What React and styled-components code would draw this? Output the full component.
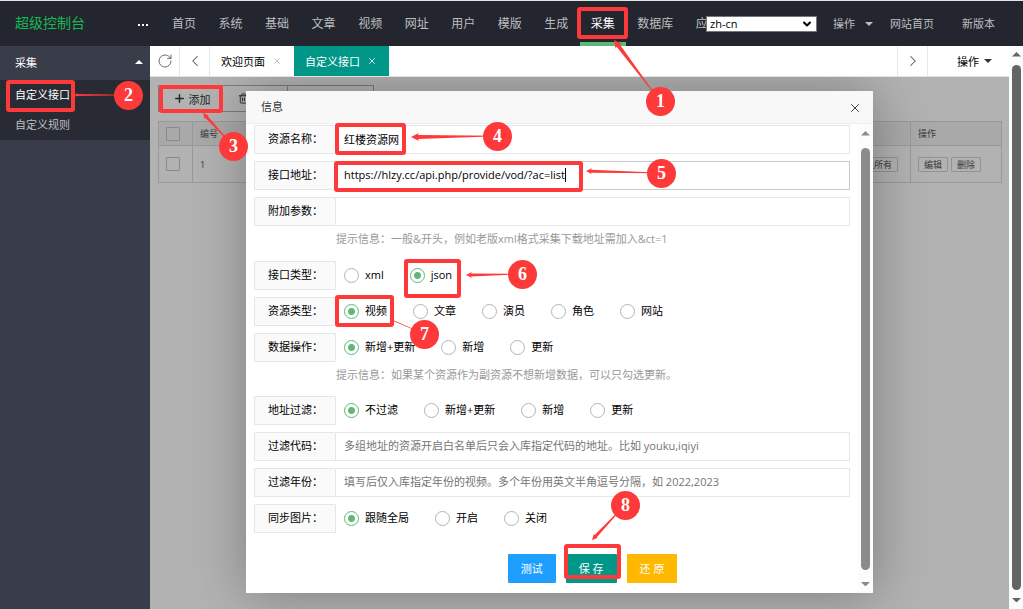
import styled, { createGlobalStyle } from 'styled-components';
import { RotateCw, ChevronLeft, ChevronRight, ChevronDown, Plus, Trash2, X } from 'lucide-react';

const navItems = ['首页', '系统', '基础', '文章', '视频', '网址', '用户', '模版', '生成', '采集', '数据库', '应用'];

const frames = [
	{ x: 577, y: 7, w: 51, h: 32 },
	{ x: 6, y: 80, w: 69, h: 32 },
	{ x: 159, y: 85, w: 64, h: 28 },
	{ x: 335, y: 123, w: 71, h: 32 },
	{ x: 334, y: 161, w: 249, h: 31 },
	{ x: 404, y: 259, w: 57, h: 39 },
	{ x: 335, y: 295, w: 59, h: 32 },
	{ x: 564, y: 544, w: 57, h: 35 },
];

const steps = [
	{ no: 1, x: 660, y: 101, tip: [614, 40], head: 4 },
	{ no: 2, x: 128, y: 95, tip: [74, 95], head: 2 },
	{ no: 3, x: 233, y: 146, tip: [203, 113], head: 3 },
	{ no: 4, x: 497, y: 136, tip: [411, 137], head: 4 },
	{ no: 5, x: 661, y: 173, tip: [586, 171], head: 3 },
	{ no: 6, x: 522, y: 274, tip: [466, 275], head: 3 },
	{ no: 7, x: 424, y: 334, tip: [392, 320], head: 1 },
	{ no: 8, x: 625, y: 505, tip: [592, 540], head: 3 },
];

// 箭头：头部宽，尾部渐细
const arrowPoints = ({ x, y, tip, head }) => {
	const [tx, ty] = tip;
	const len = Math.hypot(x - tx, y - ty);
	const ux = (x - tx) / len;
	const uy = (y - ty) / len;
	const at = (d, s) => `${tx + ux * d - uy * s},${ty + uy * d + ux * s}`;
	const d = head * 2;
	const s = head / 2;
	return [at(0, 0), at(d, head), at(d - 1, s), at(len, 0.2), at(len, -0.2), at(d - 1, -s), at(d, -head)].join(' ');
};

const Triangle = ({ up, color, size = 8 }) => (
	<svg width={size} height={size / 2} viewBox="0 0 8 4" aria-hidden="true">
		<path d={up ? 'M0 4L4 0L8 4Z' : 'M0 0L4 4L8 0Z'} fill={color} />
	</svg>
);

const RadioRow = ({ title, name, options, checked }) => (
	<Row>
		<RowTitle as="span">{title}</RowTitle>
		<RadioGroup role="radiogroup" aria-label={title}>
			{options.map((option) => (
				<RadioLabel key={option}>
					<Radio name={name} defaultChecked={option === checked} />
					<RadioText>{option}</RadioText>
				</RadioLabel>
			))}
		</RadioGroup>
	</Row>
);

const TextRow = ({ title, id, active, caret, ...rest }) => (
	<Row>
		<RowTitle htmlFor={id}>{title}</RowTitle>
		<Field $active={active}>
			<TextInput id={id} $fit={caret} {...rest} />
			{caret && <Caret />}
		</Field>
	</Row>
);

const ScrollBar = ({ color }) => (
	<>
		<Triangle up color={color} size={9} />
		<Thumb $color={color} />
		<Triangle color={color} size={9} />
	</>
);

const App = () => {
	return (
		<Page>
			<GlobalStyle />
			<Header>
				<Logo href="#">超级控制台</Logo>
				<Dots aria-label="菜单">
					<svg width="10" height="4" viewBox="0 0 10 4">
						<path d="M0 1h2v2H0zM4 1h2v2H4zM8 1h2v2H8z" fill="#fff" />
					</svg>
				</Dots>
				<Nav>
					{navItems.map((item) => (
						<NavItem key={item} href="#" $active={item === '采集'}>
							{item}
						</NavItem>
					))}
				</Nav>
				<Tools>
					<SelectBox>
						<Lang aria-label="语言" defaultValue="zh-cn">
							<option>zh-cn</option>
						</Lang>
						<ChevronDown size={12} strokeWidth={4} />
					</SelectBox>
					<ToolLink href="#" $gap="17px">
						操作
						<Triangle color="#bdbec0" />
					</ToolLink>
					<ToolLink href="#" $gap="28px">
						网站首页
					</ToolLink>
					<ToolLink href="#" $gap="28px">
						新版本
					</ToolLink>
				</Tools>
			</Header>

			<Main>
				<Side>
					<SideTitle>
						采集
						<Triangle up color="#fff" />
					</SideTitle>
					<SideList>
						<SideLink href="#" $active>
							自定义接口
						</SideLink>
						<SideLink href="#">自定义规则</SideLink>
					</SideList>
				</Side>

				<Center>
					<TabBar>
						<TabIcon aria-label="刷新">
							<RotateCw size={16} strokeWidth={1.3} />
						</TabIcon>
						<TabIcon aria-label="向左">
							<ChevronLeft size={18} strokeWidth={1.4} />
						</TabIcon>
						<Tab>
							欢迎页面
							<X size={10} strokeWidth={2} color="#bbb" />
						</Tab>
						<Tab $active>
							自定义接口
							<X size={10} strokeWidth={2} />
						</Tab>
						<TabSpace />
						<TabIcon aria-label="向右">
							<ChevronRight size={18} strokeWidth={1.4} />
						</TabIcon>
						<TabMenu>
							操作
							<Triangle color="#333" />
						</TabMenu>
					</TabBar>

					<Content>
						<Toolbar>
							<ToolButton $w="65px">
								<Plus size={13} strokeWidth={2.6} />
								添加
							</ToolButton>
							<ToolButton $w="64px" $start aria-label="删除">
								<Trash2 size={11} />
							</ToolButton>
							<ToolButton $w="85px" aria-label="更多" />
						</Toolbar>
						<Table>
							<thead>
								<tr>
									<Th $w="34px">
										<Check aria-label="全选" />
									</Th>
									<Th $w="60px">编号</Th>
									<Th />
									<Th $w="91px">操作</Th>
								</tr>
							</thead>
							<tbody>
								<tr>
									<Td>
										<Check aria-label="选择 1" />
									</Td>
									<Td>1</Td>
									<Td $right>
										<MiniButton>采集所有</MiniButton>
									</Td>
									<Td>
										<MiniGroup>
											<MiniButton>编辑</MiniButton>
											<MiniButton>删除</MiniButton>
										</MiniGroup>
									</Td>
								</tr>
							</tbody>
						</Table>

						<Shade>
							<Modal role="dialog" aria-label="信息">
								<ModalHead>
									信息
									<CloseButton aria-label="关闭窗口">
										<X size={14} strokeWidth={1.6} />
									</CloseButton>
								</ModalHead>
								<ModalBody>
									<Form onSubmit={(e) => e.preventDefault()}>
										<TextRow title="资源名称：" id="name" defaultValue="红楼资源网" />
										<TextRow
											title="接口地址："
											id="url"
											defaultValue="https://hlzy.cc/api.php/provide/vod/?ac=list"
											active
											caret
										/>
										<TextRow title="附加参数：" id="param" />
										<Hint $gap="11px">提示信息：一般&amp;开头，例如老版xml格式采集下载地址需加入&amp;ct=1</Hint>
										<RadioRow title="接口类型：" name="type" options={['xml', 'json']} checked="json" />
										<RadioRow
											title="资源类型："
											name="mid"
											options={['视频', '文章', '演员', '角色', '网站']}
											checked="视频"
										/>
										<RadioRow
											title="数据操作："
											name="opt"
											options={['新增+更新', '新增', '更新']}
											checked="新增+更新"
										/>
										<Hint $gap="10px">提示信息：如果某个资源作为副资源不想新增数据，可以只勾选更新。</Hint>
										<RadioRow
											title="地址过滤："
											name="filter"
											options={['不过滤', '新增+更新', '新增', '更新']}
											checked="不过滤"
										/>
										<TextRow
											title="过滤代码："
											id="code"
											placeholder="多组地址的资源开启白名单后只会入库指定代码的地址。比如 youku,iqiyi"
										/>
										<TextRow
											title="过滤年份："
											id="year"
											placeholder="填写后仅入库指定年份的视频。多个年份用英文半角逗号分隔，如 2022,2023"
										/>
										<RadioRow
											title="同步图片："
											name="pic"
											options={['跟随全局', '开启', '关闭']}
											checked="跟随全局"
										/>
										<Actions>
											<Button $bg="#1e9fff">测试</Button>
											<Button $bg="#009688">保 存</Button>
											<Button $bg="#ffb800">还 原</Button>
										</Actions>
									</Form>
									<InnerScroll>
										<ScrollBar color="#8b8b8b" />
									</InnerScroll>
								</ModalBody>
							</Modal>
						</Shade>
					</Content>
				</Center>

				<OuterScroll>
					<ScrollBar color="#646464" />
				</OuterScroll>
			</Main>

			<Guide>
				{frames.map((f) => (
					<Frame key={`${f.x}-${f.y}`} $x={f.x} $y={f.y} $w={f.w} $h={f.h} />
				))}
				<Arrows width="1023" height="609" aria-hidden="true">
					{steps.map((s) => (
						<polygon key={s.no} points={arrowPoints(s)} fill="#fd3939" />
					))}
				</Arrows>
				{steps.map((s) => (
					<Badge key={s.no} $x={s.x} $y={s.y}>
						{s.no}
					</Badge>
				))}
			</Guide>
		</Page>
	);
};

export default App;

// CSS
const GlobalStyle = createGlobalStyle`
	* {
		box-sizing: border-box;
	}

	body {
		margin: 0;
		font-family: 'Open Sans', 'Noto Sans CJK SC', sans-serif;
		font-size: 11px;
		color: #000;
	}

	button, input, select {
		margin: 0;
		padding: 0;
		border: 0;
		font: inherit;
		color: inherit;
		background: none;
	}

	a {
		color: inherit;
		text-decoration: none;
	}

	svg {
		flex: none;
	}
`;

const Page = styled.div`
	position: relative;
	display: flex;
	flex-direction: column;
	min-height: 100vh;
	overflow: hidden;
`;

const Header = styled.header`
	display: flex;
	align-items: stretch;
	height: 46px;
	border-top: 1px solid #dfe9df;
	background: #23262e;
	color: #bdbec0;
`;

const Logo = styled.a`
	flex: 1;
	padding-left: 15px;
	font-size: 14px;
	line-height: 44px;
	color: #16b955;
	white-space: nowrap;
`;

const Dots = styled.button`
	display: flex;
	align-items: center;
	padding: 2px 13px 0 0;
`;

const Nav = styled.nav`
	display: flex;
	flex: none;
	justify-content: space-between;
	width: 570px;
	margin-right: -25px;
`;

const NavItem = styled.a`
	padding: 0 11px;
	border-bottom: 4px solid ${(p) => (p.$active ? '#5fb878' : 'transparent')};
	font-size: 12px;
	line-height: 46px;
	color: ${(p) => (p.$active ? '#fff' : '#bdbec0')};
	white-space: nowrap;
`;

const Tools = styled.div`
	position: relative;
	display: flex;
	flex: none;
	align-items: center;
`;

const SelectBox = styled.div`
	display: flex;
	align-items: center;
	width: 111px;
	height: 16px;
	margin: 1px 16px 0 0;
	padding-right: 3px;
	border: 1px solid #767676;
	background: #fff;
	color: #000;
`;

const Lang = styled.select`
	flex: 1;
	padding-left: 3px;
	appearance: none;
	line-height: 14px;
`;

const ToolLink = styled.a`
	display: flex;
	align-items: center;
	gap: 10px;
	margin-right: ${(p) => p.$gap};
	line-height: 16px;
	white-space: nowrap;
`;

const Main = styled.div`
	display: flex;
	flex: 1;
`;

const Side = styled.aside`
	flex: none;
	width: 150px;
	background: #393d49;
	color: #fff;
`;

const SideTitle = styled.div`
	display: flex;
	align-items: center;
	justify-content: space-between;
	height: 34px;
	padding: 0 7px 2px 15px;
`;

const SideList = styled.nav`
	display: flex;
	flex-direction: column;
	background: #282b33;
`;

const SideLink = styled.a`
	padding-left: 15px;
	line-height: 30px;
	color: ${(p) => (p.$active ? '#fff' : '#bebfc2')};
`;

const Center = styled.main`
	display: flex;
	flex: 1;
	flex-direction: column;
	min-width: 0;
`;

const TabBar = styled.div`
	display: flex;
	height: 31px;
	border-bottom: 1px solid #e2e2e2;
	background: #fff;
`;

const TabIcon = styled.button`
	display: flex;
	align-items: center;
	justify-content: center;
	width: 30px;
	border-right: 1px solid #e6e6e6;
	color: #555;
`;

const Tab = styled.button`
	display: flex;
	align-items: center;
	gap: 7px;
	padding: 0 12px 0 11px;
	background: ${(p) => (p.$active ? '#009688' : '#fff')};
	color: ${(p) => (p.$active ? '#fff' : '#000')};
`;

const TabSpace = styled.div`
	flex: 1;
	border-right: 1px solid #e6e6e6;
`;

const TabMenu = styled.button`
	display: flex;
	align-items: center;
	justify-content: center;
	gap: 5px;
	width: 81px;
	padding-left: 12px;
`;

const Content = styled.section`
	position: relative;
	flex: 1;
	padding: 8px;
	background: #fff;
`;

const Toolbar = styled.div`
	display: flex;
	width: fit-content;
	border: 1px solid #b2b2b2;
`;

const ToolButton = styled.button`
	display: flex;
	align-items: center;
	justify-content: ${(p) => (p.$start ? 'flex-start' : 'center')};
	gap: 3px;
	width: ${(p) => p.$w};
	height: 25px;
	padding-left: ${(p) => (p.$start ? '14px' : '0')};
	border-right: ${(p) => (p.$start ? '1px solid #b2b2b2' : '0')};
	color: #333;
`;

const Table = styled.table`
	width: calc(100% + 1px);
	margin-top: 9px;
	border-collapse: collapse;
	table-layout: fixed;
	font-size: 9px;
	color: #555;
`;

const Th = styled.th`
	width: ${(p) => p.$w || 'auto'};
	height: 24px;
	padding: 0 7px;
	border: 1px solid #dcdcdc;
	background: #f2f2f2;
	font-weight: 400;
	text-align: left;
`;

const Td = styled.td`
	height: 37px;
	padding: 0 ${(p) => (p.$right ? '12px' : '7px')} 0 7px;
	border: 1px solid #dcdcdc;
	text-align: ${(p) => (p.$right ? 'right' : 'left')};
`;

const Check = styled.input.attrs({ type: 'checkbox' })`
	display: block;
	width: 14px;
	height: 14px;
	border: 1px solid #c4c4c4;
	border-radius: 1px;
	appearance: none;
`;

const MiniGroup = styled.div`
	display: flex;
	gap: 3px;
`;

const MiniButton = styled.button`
	height: 15px;
	padding: 0 5px;
	border: 1px solid #d2d2d2;
	border-radius: 1px;
	line-height: 13px;
	white-space: nowrap;
`;

const Shade = styled.div`
	position: absolute;
	inset: 0;
	overflow: hidden;
	background: rgba(0, 0, 0, 0.3);
`;

const Modal = styled.div`
	width: 73%;
	margin: 14px 0 0 96px;
	background: #fff;
	box-shadow: 1px 1px 50px rgba(0, 0, 0, 0.3);
`;

const ModalHead = styled.div`
	display: flex;
	align-items: center;
	justify-content: space-between;
	height: 33px;
	padding: 0 11px 2px 15px;
	border-bottom: 1px solid #eee;
	background: #f8f8f8;
	color: #333;
`;

const CloseButton = styled.button`
	display: flex;
	padding-top: 4px;
`;

const ModalBody = styled.div`
	display: flex;
`;

const Form = styled.form`
	flex: 1;
	padding: 1px 8px 10px;
`;

const Row = styled.div`
	display: flex;
	height: 29px;
	margin-bottom: 7px;
`;

const RowTitle = styled.label`
	flex: none;
	width: 82px;
	padding-left: 13px;
	border: 1px solid #e6e6e6;
	border-radius: 1px;
	background: #fafafa;
	line-height: 26px;
	white-space: nowrap;
`;

const Field = styled.div`
	display: flex;
	flex: 1;
	align-items: center;
	padding: 0 0 2px 8px;
	border: 1px solid ${(p) => (p.$active ? '#c9c9c9' : '#e6e6e6')};
	border-left: 0;
	border-radius: 1px;
`;

const TextInput = styled.input`
	flex: ${(p) => (p.$fit ? 'none' : '1')};
	field-sizing: ${(p) => (p.$fit ? 'content' : 'fixed')};
	outline: none;

	&::placeholder {
		color: #757575;
	}
`;

const Caret = styled.span`
	width: 1px;
	height: 14px;
	background: #000;
`;

const Hint = styled.p`
	margin: -7px 0 ${(p) => p.$gap};
	padding: 1px 0 0 82px;
	line-height: 23px;
	color: #999;
	white-space: nowrap;
`;

const RadioGroup = styled.div`
	display: flex;
	align-items: center;
	gap: 26px;
	padding-left: 8px;
`;

const RadioLabel = styled.label`
	display: flex;
	align-items: center;
	gap: 6px;
`;

const RadioText = styled.span`
	padding-bottom: 1px;
	line-height: 14px;
	white-space: nowrap;
`;

const Radio = styled.input.attrs({ type: 'radio' })`
	width: 15px;
	height: 15px;
	border: 1px solid #b4b4b4;
	border-radius: 50%;
	appearance: none;

	&:checked {
		border-color: #5fb878;
		background: radial-gradient(#5fb878 3px, transparent 4px);
	}
`;

const Actions = styled.div`
	display: flex;
	justify-content: center;
	gap: 10px;
	margin: 21px 0 0 81px;
`;

const Button = styled.button`
	height: 29px;
	padding: 0 13px 2px;
	border-radius: 1px;
	background: ${(p) => p.$bg};
	color: #fff;
	white-space: nowrap;
`;

const InnerScroll = styled.div`
	display: flex;
	flex-direction: column;
	align-items: center;
	gap: 12px;
	width: 15px;
	padding: 7px 0;
	background: #fcfcfc;
`;

const OuterScroll = styled(InnerScroll)`
	gap: 8px;
	width: 14px;
	padding: 6px 0 7px;
`;

const Thumb = styled.div`
	flex: 1;
	width: 9px;
	border-radius: 5px;
	background: ${(p) => p.$color};
`;

const Guide = styled.div`
	position: absolute;
	inset: 0;
	pointer-events: none;
`;

const Frame = styled.div`
	position: absolute;
	top: ${(p) => p.$y}px;
	left: ${(p) => p.$x}px;
	width: ${(p) => p.$w}px;
	height: ${(p) => p.$h}px;
	border: 4px solid #fd3939;
	border-radius: 3px;
`;

const Arrows = styled.svg`
	position: absolute;
	top: 0;
	left: 0;
`;

const Badge = styled.span`
	position: absolute;
	top: ${(p) => p.$y - 14}px;
	left: ${(p) => p.$x - 14}px;
	width: 29px;
	height: 29px;
	border-radius: 50%;
	background: #fd3939;
	color: #fff;
	font: bold 18px/28px 'Liberation Serif', serif;
	text-align: center;
`;
